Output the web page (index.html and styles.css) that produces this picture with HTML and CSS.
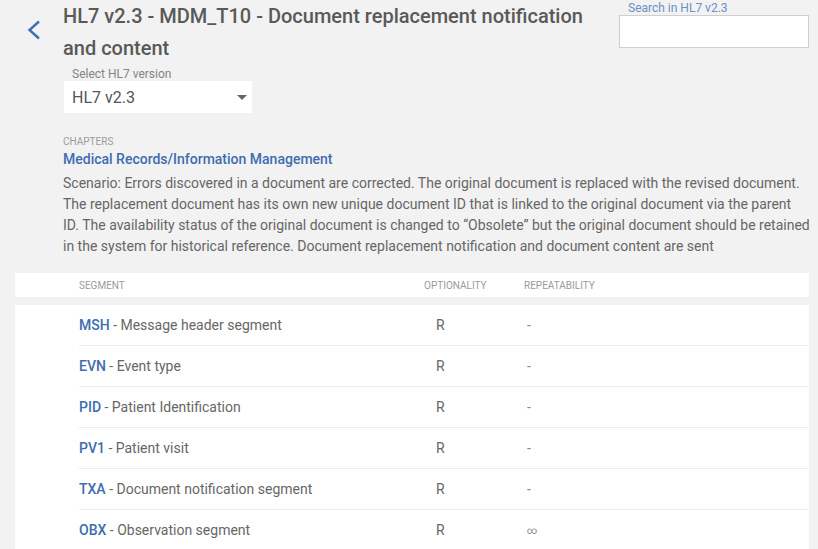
FILE: index.html
```html
<!DOCTYPE html>
<html>
<head>
<meta charset="utf-8">
<link rel="stylesheet" href="styles.css">
</head>
<body>
<div class="page">
  <div class="top">
    <div class="back">
      <svg width="14" height="20" viewBox="0 0 14 20"><polyline points="12,1.5 2.5,10 12,18.5" fill="none" stroke="#3c6fb4" stroke-width="2.4"/></svg>
    </div>
    <div class="main">
      <div class="head">
        <h1 class="title">HL7 v2.3 - MDM_T10 - Document replacement notification and content</h1>
        <div class="search">
          <div class="search-label">Search in HL7 v2.3</div>
          <div class="search-input"></div>
        </div>
      </div>
      <div class="version">
        <div class="version-label">Select HL7 version</div>
        <div class="select">
          <span>HL7 v2.3</span>
          <span class="caret"></span>
        </div>
      </div>
      <div class="chapters-label">CHAPTERS</div>
      <div class="chapter">Medical Records/Information Management</div>
      <p class="desc">Scenario: Errors discovered in a document are corrected. The original document is replaced with the revised document. The replacement document has its own new unique document ID that is linked to the original document via the parent<br>ID. The availability status of the original document is changed to “Obsolete” but the original document should be retained in the system for historical reference. Document replacement notification and document content are sent</p>
    </div>
  </div>
  <div class="thead">
    <div>SEGMENT</div>
    <div>OPTIONALITY</div>
    <div>REPEATABILITY</div>
  </div>
  <div class="tbody">
    <div class="row"><div><span class="code">MSH</span> - Message header segment</div><div class="opt">R</div><div class="rep">-</div></div>
    <div class="row"><div><span class="code">EVN</span> - Event type</div><div class="opt">R</div><div class="rep">-</div></div>
    <div class="row"><div><span class="code">PID</span> - Patient Identification</div><div class="opt">R</div><div class="rep">-</div></div>
    <div class="row"><div><span class="code">PV1</span> - Patient visit</div><div class="opt">R</div><div class="rep">-</div></div>
    <div class="row"><div><span class="code">TXA</span> - Document notification segment</div><div class="opt">R</div><div class="rep">-</div></div>
    <div class="row"><div><span class="code">OBX</span> - Observation segment</div><div class="opt">R</div><div class="rep inf">∞</div></div>
  </div>
</div>
</body>
</html>
```
FILE: styles.css
```css
html, body {
  margin: 0;
  background: #f2f2f2;
  font-family: Roboto, "Liberation Sans", sans-serif;
  color: #666;
}
.page {
  padding: 0 9px 0 15px;
  height: 549px;
  overflow: hidden;
}
.top {
  display: flex;
}
.back {
  width: 48px;
  flex-shrink: 0;
  padding: 20px 0 0 12px;
  box-sizing: border-box;
}
.back svg {
  display: block;
}
.main {
  flex: 1;
  min-width: 0;
}
.head {
  display: flex;
  gap: 20px;
}
.title {
  flex: 1;
  margin: 0;
  font-size: 20px;
  line-height: 32px;
  font-weight: 500;
  color: #595959;
}
.search {
  width: 190px;
  flex-shrink: 0;
  padding-top: 2px;
}
.search-label {
  font-size: 12px;
  line-height: 13px;
  color: #6b8fc6;
  padding-left: 9px;
}
.search-input {
  height: 31px;
  background: #fff;
  border: 1px solid #cfcfcf;
}
.version {
  margin-top: 3px;
}
.version-label {
  font-size: 12px;
  line-height: 14px;
  color: #858585;
  padding-left: 9px;
}
.select {
  margin-left: 1px;
  width: 188px;
  height: 32px;
  background: #fff;
  display: flex;
  align-items: center;
  justify-content: space-between;
  padding: 0 4px 0 8px;
  box-sizing: border-box;
  font-size: 16px;
  line-height: 19px;
  color: #555;
}
.caret {
  width: 0;
  height: 0;
  border-left: 5px solid transparent;
  border-right: 5px solid transparent;
  border-top: 5px solid #666;
  margin-right: 1px;
}
.chapters-label {
  margin-top: 23px;
  font-size: 10px;
  line-height: 12px;
  color: #9a9a9a;
}
.chapter {
  margin-top: 3px;
  font-size: 14px;
  line-height: 16px;
  font-weight: 500;
  color: #3d6db0;
}
.desc {
  margin: 6px -6px 0 0;
  font-size: 14px;
  line-height: 21px;
  color: #666;
}
.thead {
  margin-top: 16px;
  height: 24px;
  background: #fff;
  display: grid;
  grid-template-columns: 345px 100px 1fr;
  align-items: center;
  padding-left: 64px;
  font-size: 10px;
  color: #9a9a9a;
}
.tbody {
  margin-top: 8px;
  background: #fff;
  padding-left: 64px;
}
.row {
  display: grid;
  grid-template-columns: 345px 100px 1fr;
  align-items: center;
  height: 40px;
  border-bottom: 1px solid #ececec;
  font-size: 14px;
  color: #666;
}
.code {
  font-weight: 500;
  color: #3d6db0;
}
.opt {
  padding-left: 12px;
}
.rep {
  padding-left: 3px;
  color: #888;
}
.inf {
  font-size: 10px;
}
```
